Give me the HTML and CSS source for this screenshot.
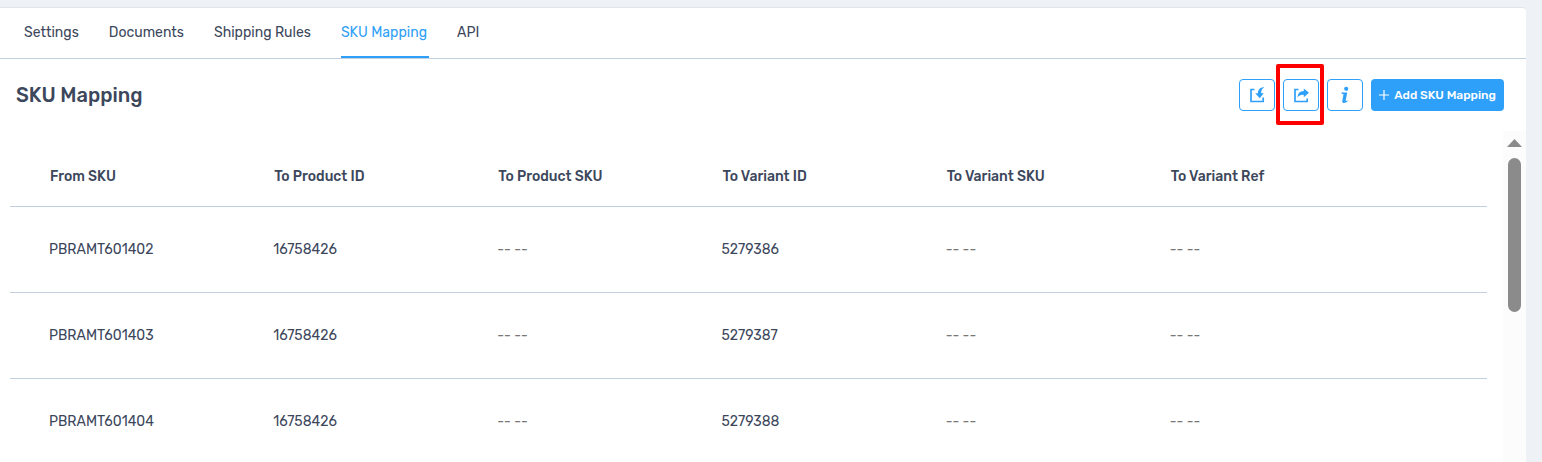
FILE: index.html
```html
<!DOCTYPE html>
<html lang="en">
<head>
<meta charset="utf-8">
<meta name="viewport" content="width=device-width, initial-scale=1">
<title>SKU Mapping</title>
<link rel="stylesheet" href="styles.css">
</head>
<body>
<main class="panel">
  <nav class="tabs" aria-label="Channel sections">
    <a class="tab" href="#settings">Settings</a>
    <a class="tab" href="#documents">Documents</a>
    <a class="tab" href="#shipping">Shipping Rules</a>
    <a class="tab tab-active" href="#sku" aria-current="page">SKU Mapping</a>
    <a class="tab" href="#api">API</a>
  </nav>
  <header class="toolbar">
    <h1 class="title">SKU Mapping</h1>
    <div class="actions">
      <button class="icon-button" type="button" aria-label="Import">
        <svg class="icon" viewBox="0 0 18 18" aria-hidden="true">
          <path d="M6.500 3.500H3v12h12.200V11.500" fill="none" stroke="currentColor" stroke-width="1.700"/>
          <path d="M16.200 1.200C12.800 1 10 3 9.900 7.200H7.200l4.600 5L15.700 7.200h-2.500c-.1-2.600.8-4.600 3-6z" fill="currentColor"/>
        </svg>
      </button>
      <span class="highlight">
        <button class="icon-button" type="button" aria-label="Export">
          <svg class="icon" viewBox="0 0 18 18" aria-hidden="true">
            <path d="M6.500 3.500H3v12h12.200V12.500" fill="none" stroke="currentColor" stroke-width="1.700"/>
            <path d="M11.800 2.500 17 6.800l-5.200 4.500V8.900C8.800 8.700 6.800 9.600 5.600 11.600 5.600 7.800 7.800 5.200 11.800 5.100z" fill="currentColor"/>
          </svg>
        </button>
      </span>
      <button class="icon-button" type="button" aria-label="Information">
        <svg class="icon" viewBox="0 0 18 18" aria-hidden="true">
          <circle cx="10.200" cy="2.800" r="2.100" fill="currentColor"/>
          <path d="M5.500 6.400h5.800L9.700 14.300c-.2 1 .6.900 2.100-.1l-.3 1.400c-2.100 1.700-5.700 2.100-5.200-.7L7.500 8.200 5.300 7.600z" fill="currentColor"/>
        </svg>
      </button>
      <button class="add-button" type="button">
        <svg class="plus" viewBox="0 0 10 10" aria-hidden="true"><path d="M5 0v10M0 5h10" stroke="currentColor" stroke-width="1.200"/></svg>
        Add SKU Mapping
      </button>
    </div>
  </header>
  <section class="content">
    <div class="table-wrap">
      <table class="table">
        <thead>
          <tr><th>From SKU</th><th>To Product ID</th><th>To Product SKU</th><th>To Variant ID</th><th>To Variant SKU</th><th>To Variant Ref</th><td class="spare"></td></tr>
        </thead>
        <tbody>
          <tr><td>PBRAMT601402</td><td>16758426</td><td class="empty">-- --</td><td>5279386</td><td class="empty">-- --</td><td class="empty">-- --</td><td class="spare"></td></tr>
          <tr><td>PBRAMT601403</td><td>16758426</td><td class="empty">-- --</td><td>5279387</td><td class="empty">-- --</td><td class="empty">-- --</td><td class="spare"></td></tr>
          <tr><td>PBRAMT601404</td><td>16758426</td><td class="empty">-- --</td><td>5279388</td><td class="empty">-- --</td><td class="empty">-- --</td><td class="spare"></td></tr>
        </tbody>
      </table>
    </div>
    <div class="scroll-track" aria-hidden="true">
      <svg class="scroll-arrow" viewBox="0 0 15 8"><path d="M7.500 0 15 8H0z" fill="currentColor"/></svg>
      <div class="scroll-thumb"></div>
    </div>
  </section>
</main>
</body>
</html>
```

FILE: styles.css
```css
* { box-sizing: border-box; }

body {
  display: flex;
  height: 100vh;
  margin: 0;
  padding: 7px 16px 0 0;
  overflow: hidden;
  background: #eef2f6;
  color: #3c475c;
  font: 14px/20px Rubik, Roboto, sans-serif;
}

.panel {
  display: flex;
  flex: 1;
  flex-direction: column;
  min-width: 0;
  border-top: 1px solid #e1e5ea;
  border-top-right-radius: 4px;
  background: #fff;
}

.tabs {
  display: flex;
  gap: 28px;
  padding: 0 24px;
  border-bottom: 1px solid #c0d0e0;
}

.tab {
  padding: 15px 2px 13px 0;
  border-bottom: 2px solid transparent;
  color: inherit;
  text-decoration: none;
}

.tab-active {
  border-color: #2f9ff8;
  color: #2f9ff8;
}

.toolbar {
  display: flex;
  align-items: center;
  justify-content: space-between;
  padding: 20px 22px 20px 16px;
}

.title {
  margin: 0;
  font-size: 20px;
  font-weight: 500;
  line-height: 24px;
}

.actions {
  display: flex;
  gap: 8px;
}

.icon-button {
  display: flex;
  align-items: center;
  justify-content: center;
  width: 36px;
  height: 32px;
  padding: 0;
  border: 1px solid #2fa0fa;
  border-radius: 4px;
  background: #fff;
  color: #2fa0fa;
}

.icon {
  width: 18px;
  height: 18px;
}

.highlight { position: relative; }

.highlight::after {
  position: absolute;
  inset: -15px -5px -14px -7px;
  border: 4px solid #f00;
  border-radius: 2px;
  content: "";
  pointer-events: none;
}

.add-button {
  display: flex;
  align-items: center;
  gap: 5px;
  height: 32px;
  padding: 0 8px;
  border: 0;
  border-radius: 4px;
  background: #2fa0fa;
  color: #fff;
  font: 500 12px/20px Rubik, Roboto, sans-serif;
}

.plus {
  width: 10px;
  height: 10px;
}

.content {
  display: flex;
  flex: 1;
  min-height: 0;
}

.table-wrap {
  flex: 1;
  min-width: 0;
  padding: 14px 16px 0 10px;
  overflow: hidden;
}

.table {
  width: 100%;
  border-collapse: separate;
  border-spacing: 0;
  table-layout: fixed;
}

.table th,
.table td {
  border-bottom: 1px solid #c0d0e0;
  text-align: left;
}

.table th {
  height: 62px;
  padding: 2px 0 0 40px;
  font-weight: 500;
}

.table td {
  height: 86px;
  padding: 1px 0 0 39px;
}

.table .empty { color: #777; }

.table .spare {
  width: 132px;
  height: auto;
  padding: 0;
}

.scroll-track {
  display: flex;
  flex-direction: column;
  align-items: center;
  gap: 11px;
  width: 23px;
  padding-top: 8px;
  background: #fcfcfc;
}

.scroll-arrow {
  width: 15px;
  height: 8px;
  color: #8b8b8b;
}

.scroll-thumb {
  width: 13px;
  height: 154px;
  border-radius: 7px;
  background: #8b8b8b;
}
```
